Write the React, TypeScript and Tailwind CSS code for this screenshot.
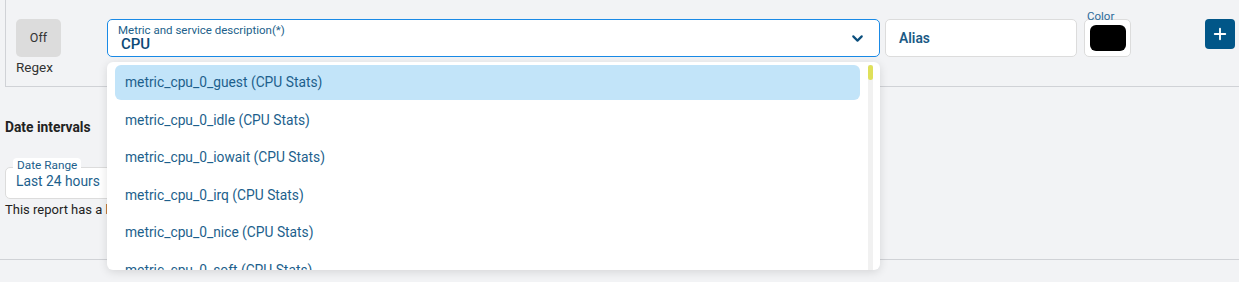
import { ChevronDown, Plus } from 'lucide-react'

const options = [
  'metric_cpu_0_guest (CPU Stats)',
  'metric_cpu_0_idle (CPU Stats)',
  'metric_cpu_0_iowait (CPU Stats)',
  'metric_cpu_0_irq (CPU Stats)',
  'metric_cpu_0_nice (CPU Stats)',
  'metric_cpu_0_soft (CPU Stats)',
]

export default function App() {
  return (
    <div className="w-[1239px] h-[282px] overflow-hidden bg-[#f2f3f5] font-['Roboto',sans-serif]">
      {/* Metric row panel */}
      <div className="ml-[5px] h-[87px] border-l border-b border-[#d0d2d6] pt-[19px] pl-[10px]">
        <div className="flex items-start">
          <div className="flex flex-col w-[45px]">
            <button className="w-[45px] h-[38px] rounded-[5px] bg-[#dcdcdc] text-[12.5px] text-[#333] flex items-center justify-center">
              Off
            </button>
            <span className="mt-[3px] text-[13.5px] leading-[15px] text-[#333]">Regex</span>
          </div>

          {/* Select */}
          <div className="relative ml-[46px] w-[773px]">
            <div className="h-[38px] rounded-[5px] border border-[#1a8ae6] bg-white pl-[10px] pr-[13px] flex items-center">
              <div className="flex-1 flex flex-col">
                <span className="text-[11.5px] leading-[12px] text-[#225f8a]">
                  Metric and service description(*)
                </span>
                <span className="pl-[3px] text-[15px] leading-[16px] font-medium text-[#0c4a76]">CPU</span>
              </div>
              <ChevronDown className="w-[17px] h-[17px] text-[#0b4f7d]" strokeWidth={3} />
            </div>

            {/* Dropdown menu */}
            <div className="absolute left-0 top-[43px] w-[773px] h-[208px] rounded-[6px] bg-white shadow-[0_2px_10px_rgba(0,0,0,0.12)] overflow-hidden flex pl-[8px] pt-[3px] z-10">
              <div className="w-[745px] flex flex-col gap-[2.5px]">
                {options.map((opt, i) => (
                  <div
                    key={opt}
                    className={`shrink-0 h-[35px] rounded-[6px] pl-[10px] flex items-center text-[13.8px] text-[#1d5f8c] ${
                      i === 0 ? 'bg-[#c2e4f9]' : ''
                    }`}
                  >
                    {opt}
                  </div>
                ))}
              </div>
              <div className="ml-[8px] w-[5px] h-full bg-[#f1f1f1]">
                <div className="w-[5px] h-[15px] rounded-[3px] bg-[#dfe05a]" />
              </div>
            </div>
          </div>

          {/* Alias */}
          <div className="ml-[5px] w-[192px] h-[38px] rounded-[5px] border border-[#dcdcdc] bg-white pl-[13px] flex items-center">
            <span className="text-[13.8px] font-semibold text-[#1b5a85]">Alias</span>
          </div>

          {/* Color */}
          <div className="relative ml-[7px]">
            <span className="absolute -top-[9px] left-[3px] text-[11.5px] leading-[12px] text-[#2b6a99]">Color</span>
            <div className="w-[47px] h-[38px] rounded-[5px] border border-[#dcdcdc] bg-white flex items-center justify-center">
              <div className="w-[36px] h-[26px] rounded-[6px] bg-black" />
            </div>
          </div>

          <button className="ml-[74px] w-[30px] h-[30px] rounded-[4px] bg-[#015688] flex items-center justify-center">
            <Plus className="w-[18px] h-[18px] text-white" strokeWidth={2.5} />
          </button>
        </div>
      </div>

      {/* Date intervals */}
      <div className="pl-[5px]">
        <h3 className="mt-[33px] text-[13.8px] leading-[15px] font-bold text-[#222]">Date intervals</h3>
        <div className="relative mt-[32px] w-[300px] h-[32px] rounded-[5px] border border-[#dcdcdc] bg-white pl-[10px] flex items-center">
          <span className="absolute -top-[10px] left-[7px] px-[4px] rounded-[4px] bg-white text-[11.8px] leading-[14px] text-[#1d5f8c]">
            Date Range
          </span>
          <span className="mt-[-3px] text-[13.8px] text-[#1d5f8c]">Last 24 hours</span>
        </div>
        <p className="mt-[3px] text-[13px] leading-[16px] text-[#222]">
          This report has a limit of data that can be displayed
        </p>
      </div>
      <div className="mt-[41px] border-b border-[#d0d2d6]" />
    </div>
  )
}
